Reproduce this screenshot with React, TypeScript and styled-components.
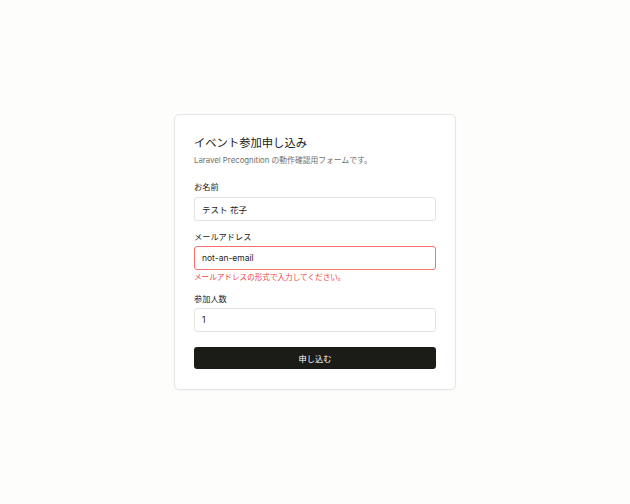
import React from "react";
import styled, { createGlobalStyle } from "styled-components";

const Global = createGlobalStyle`
  html, body { margin: 0; padding: 0; }
  body {
    background: #fdfdfc;
    font-family: Inter, "Noto Sans CJK JP", sans-serif;
    color: #1b1b18;
  }
  * { box-sizing: border-box; }
`;

const Page = styled.main`
  min-height: 504px;
  display: flex;
  align-items: center;
  justify-content: center;
`;

const Card = styled.section`
  width: 282px;
  padding: 20px 19px;
  background: #ffffff;
  border: 1px solid #e6e6e2;
  border-radius: 5px;
  box-shadow: 0 1px 2px rgba(0, 0, 0, 0.03);
`;

const Title = styled.h1`
  margin: 0;
  font-size: 11.3px;
  line-height: 17.6px;
  font-weight: 400;
  color: #1b1b18;
`;

const Subtitle = styled.p`
  margin: 2.5px 0 0;
  font-size: 7.8px;
  line-height: 10px;
  color: #706f6c;
`;

const Form = styled.form`
  margin-top: 16px;
  display: flex;
  flex-direction: column;
  gap: 10px;
`;

const Field = styled.div`
  display: flex;
  flex-direction: column;
`;

const Label = styled.label`
  font-size: 8.2px;
  line-height: 12.6px;
  margin-bottom: 3px;
  color: #1b1b18;
`;

const Input = styled.input<{ $error?: boolean }>`
  height: 24px;
  width: 100%;
  padding: 0 7px;
  border: 1px solid ${(p) => (p.$error ? "#f87171" : "#e3e3e0")};
  border-radius: 3px;
  font-family: Inter, "Noto Sans CJK JP", sans-serif;
  font-size: 8.5px;
  color: #1b1b18;
  background: #ffffff;
  outline: none;
`;

const ErrorText = styled.p`
  margin: 2.5px 0 0;
  font-size: 7.6px;
  line-height: 10px;
  color: #ef4444;
`;

const Button = styled.button`
  margin-top: 5px;
  height: 22px;
  width: 100%;
  border: none;
  border-radius: 3px;
  background: #1b1b18;
  color: #ffffff;
  font-family: Inter, "Noto Sans CJK JP", sans-serif;
  font-size: 8.2px;
  font-weight: 400;
  cursor: pointer;
`;

export default function App() {
  return (
    <>
      <Global />
      <Page>
        <Card>
          <Title>イベント参加申し込み</Title>
          <Subtitle>Laravel Precognition の動作確認用フォームです。</Subtitle>
          <Form onSubmit={(e) => e.preventDefault()}>
            <Field>
              <Label>お名前</Label>
              <Input defaultValue="テスト 花子" />
            </Field>
            <Field>
              <Label>メールアドレス</Label>
              <Input $error defaultValue="not-an-email" />
              <ErrorText>メールアドレスの形式で入力してください。</ErrorText>
            </Field>
            <Field>
              <Label>参加人数</Label>
              <Input defaultValue="1" />
            </Field>
            <Button type="submit">申し込む</Button>
          </Form>
        </Card>
      </Page>
    </>
  );
}
